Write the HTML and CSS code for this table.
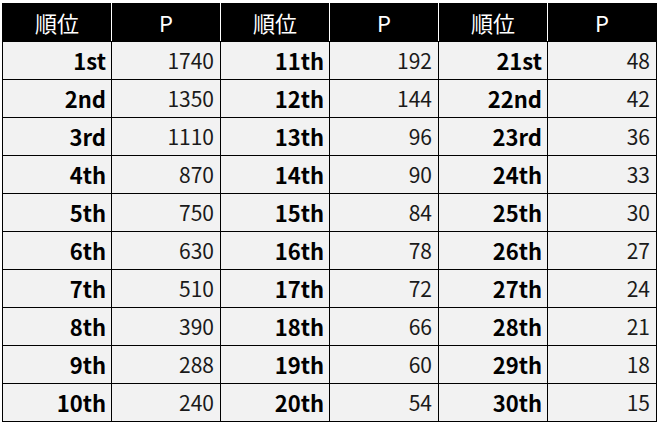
FILE: index.html
```html
<!DOCTYPE html>
<html lang="ja">
<head>
<meta charset="utf-8">
<link rel="stylesheet" href="styles.css">
</head>
<body>
<table class="rank">
  <thead>
    <tr><th>順位</th><th>P</th><th>順位</th><th>P</th><th>順位</th><th>P</th></tr>
  </thead>
  <tbody>
    <tr><td class="r">1st</td><td class="p">1740</td><td class="r">11th</td><td class="p">192</td><td class="r">21st</td><td class="p">48</td></tr>
    <tr><td class="r">2nd</td><td class="p">1350</td><td class="r">12th</td><td class="p">144</td><td class="r">22nd</td><td class="p">42</td></tr>
    <tr><td class="r">3rd</td><td class="p">1110</td><td class="r">13th</td><td class="p">96</td><td class="r">23rd</td><td class="p">36</td></tr>
    <tr><td class="r">4th</td><td class="p">870</td><td class="r">14th</td><td class="p">90</td><td class="r">24th</td><td class="p">33</td></tr>
    <tr><td class="r">5th</td><td class="p">750</td><td class="r">15th</td><td class="p">84</td><td class="r">25th</td><td class="p">30</td></tr>
    <tr><td class="r">6th</td><td class="p">630</td><td class="r">16th</td><td class="p">78</td><td class="r">26th</td><td class="p">27</td></tr>
    <tr><td class="r">7th</td><td class="p">510</td><td class="r">17th</td><td class="p">72</td><td class="r">27th</td><td class="p">24</td></tr>
    <tr><td class="r">8th</td><td class="p">390</td><td class="r">18th</td><td class="p">66</td><td class="r">28th</td><td class="p">21</td></tr>
    <tr><td class="r">9th</td><td class="p">288</td><td class="r">19th</td><td class="p">60</td><td class="r">29th</td><td class="p">18</td></tr>
    <tr><td class="r">10th</td><td class="p">240</td><td class="r">20th</td><td class="p">54</td><td class="r">30th</td><td class="p">15</td></tr>
  </tbody>
</table>
</body>
</html>
```

FILE: styles.css
```css
html, body {
  margin: 0;
  background: #ffffff;
}
body {
  padding: 3px 2px 0 2px;
}
.rank {
  border-collapse: collapse;
  table-layout: fixed;
  width: 655px;
  font-family: "Noto Sans CJK JP", "Noto Sans", sans-serif;
  font-size: 21px;
  color: #111111;
}
.rank th {
  background: #000000;
  color: #ffffff;
  font-weight: 400;
  font-size: 22px;
  height: 36px;
  padding: 0 0 1px 0;
  text-align: center;
  border: 1px solid #000000;
  border-left-color: #ffffff;
  border-right-color: #ffffff;
}
.rank th:first-child {
  border-left-color: #000000;
}
.rank th:last-child {
  border-right-color: #000000;
}
.rank td {
  background: #f2f2f2;
  border: 1px solid #000000;
  height: 37px;
  padding: 0 5px 0 0;
  text-align: right;
  line-height: 1;
}
.rank td.r {
  font-weight: 700;
  font-size: 22px;
  color: #000000;
  height: 35px;
  padding-bottom: 2px;
}
.rank td.p {
  font-weight: 400;
  padding-right: 6px;
  color: #1a1a1a;
}
```
